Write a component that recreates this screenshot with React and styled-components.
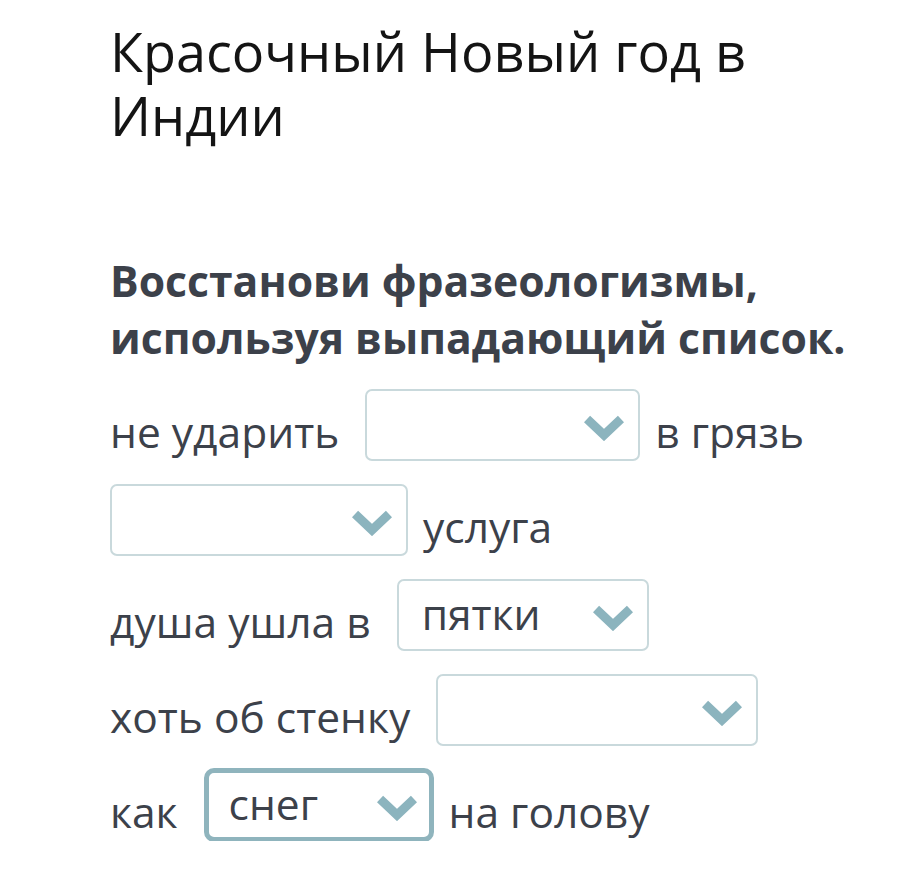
import React from "react";
import styled, { createGlobalStyle } from "styled-components";

const GlobalStyle = createGlobalStyle`
  body {
    margin: 0;
    background: #ffffff;
    font-family: "Open Sans", "Noto Sans", sans-serif;
  }
`;

const Page = styled.div`
  padding: 19px 0 0 110px;
  width: 916px;
  box-sizing: border-box;
`;

const Title = styled.h1`
  margin: 0;
  font-size: 54px;
  font-weight: 400;
  line-height: 64px;
  color: #141414;
  width: 680px;
`;

const Instruction = styled.h2`
  margin: 105px 0 0 0;
  font-size: 42.7px;
  font-weight: 700;
  line-height: 57px;
  color: #3c414a;
  white-space: nowrap;
`;

const Rows = styled.div`
  margin-top: 23px;
  display: flex;
  flex-direction: column;
  gap: 23px;
`;

const Row = styled.div`
  display: flex;
  align-items: flex-start;
  height: 72px;
`;

const Text = styled.span`
  font-size: 42.5px;
  line-height: 72px;
  padding-top: 7px;
  color: #3c414a;
  white-space: nowrap;
`;

const SelectBox = styled.div`
  box-sizing: border-box;
  width: ${(p) => p.$width}px;
  height: ${(p) => (p.$focused ? 74 : 72)}px;
  margin: ${(p) => (p.$focused ? "-1px" : "0")} 15px 0 26px;
  border: ${(p) => (p.$focused ? "5px solid #8fb4bd" : "2px solid #c9d9dc")};
  border-radius: ${(p) => (p.$focused ? 10 : 7)}px;
  display: flex;
  align-items: center;
  justify-content: space-between;
  padding: 0 ${(p) => (p.$focused ? 12 : 14)}px 0 ${(p) => (p.$focused ? 20 : 23)}px;
  background: #fff;

  &:first-child {
    margin-left: 0;
  }
`;

const Value = styled.span`
  font-size: 42.5px;
  line-height: 72px;
  margin-top: -2px;
  color: #3c414a;
`;

const Chevron = styled.svg`
  width: 40px;
  height: 26px;
  margin-top: 6px;
  flex-shrink: 0;
`;

const ChevronIcon = () => (
  <Chevron viewBox="0 0 40 26">
    <polyline
      points="3,4 20,20 37,4"
      fill="none"
      stroke="#8cb4be"
      strokeWidth="9"
      strokeLinejoin="miter"
    />
  </Chevron>
);

const Select = ({ width, value, focused }) => (
  <SelectBox $width={width} $focused={focused}>
    <Value>{value}</Value>
    <ChevronIcon />
  </SelectBox>
);

export default function App() {
  return (
    <Page>
      <GlobalStyle />
      <Title>Красочный Новый год в Индии</Title>
      <Instruction>
        Восстанови фразеологизмы,
        <br />
        используя выпадающий список.
      </Instruction>
      <Rows>
        <Row>
          <Text>не ударить</Text>
          <Select width={275} value="" />
          <Text>в грязь</Text>
        </Row>
        <Row>
          <Select width={298} value="" />
          <Text>услуга</Text>
        </Row>
        <Row>
          <Text>душа ушла в</Text>
          <Select width={252} value="пятки" />
        </Row>
        <Row>
          <Text>хоть об стенку</Text>
          <Select width={322} value="" />
        </Row>
        <Row>
          <Text>как</Text>
          <Select width={230} value="снег" focused />
          <Text>на голову</Text>
        </Row>
      </Rows>
    </Page>
  );
}
